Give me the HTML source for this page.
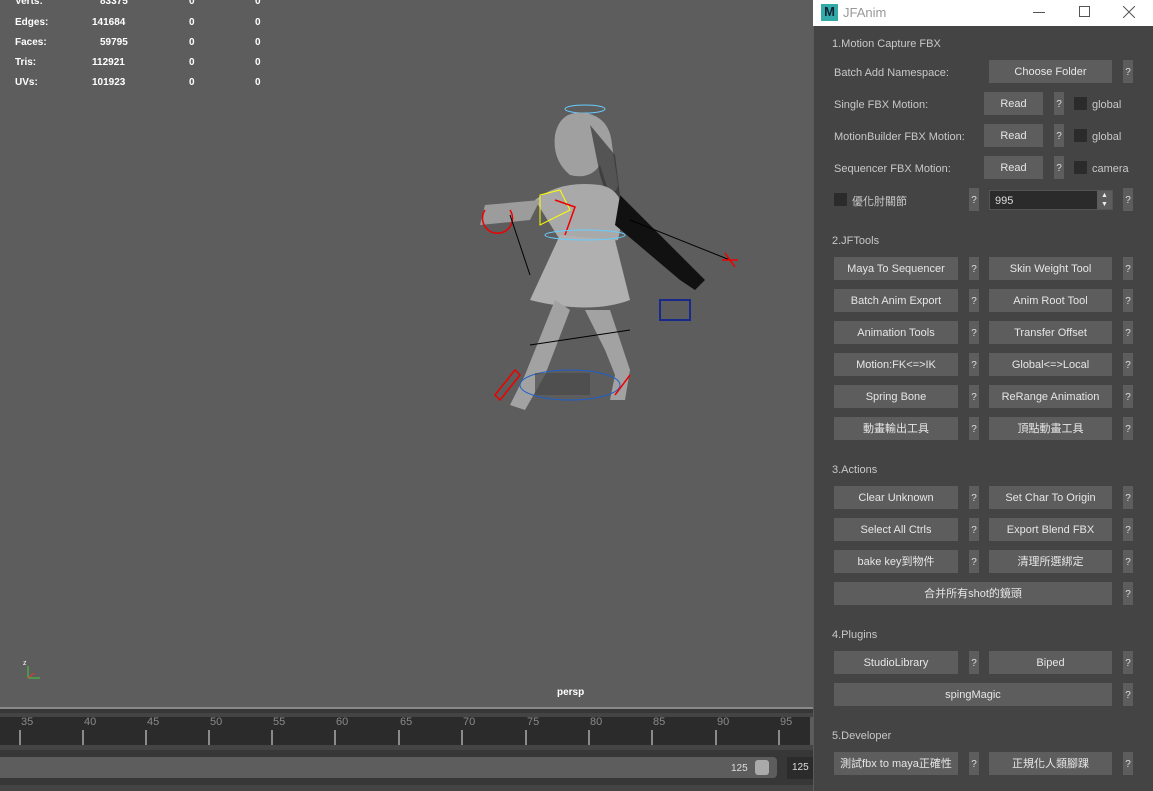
<!DOCTYPE html>
<html><head><meta charset="utf-8"><style>
*{margin:0;padding:0;box-sizing:border-box}
body{width:1153px;height:791px;overflow:hidden;background:#5d5d5d;font-family:"Liberation Sans","Noto Sans CJK TC",sans-serif;position:relative}
.a{position:absolute}
.st{color:#fff;font-weight:bold;font-size:10px;position:absolute}
.panel{position:absolute;left:813px;top:0;width:340px;height:791px;background:#444;border-left:1px solid #5a5a5a}
.tb{position:absolute;left:813px;top:0;width:340px;height:26px;background:#fff}
.h{position:absolute;left:832px;font-size:11px;color:#c8c8c8}
.lb{position:absolute;left:834px;font-size:11px;color:#c8c8c8}
.b{position:absolute;height:23px;background:#5d5d5d;color:#e6e6e6;font-size:11px;text-align:center;line-height:25px;white-space:nowrap}
.q{position:absolute;width:10px;height:23px;background:#5d5d5d;color:#ddd;font-size:10px;text-align:center;line-height:25px}
.cb{position:absolute;width:13px;height:13px;background:#2b2b2b}
.tk{position:absolute;top:730px;width:2px;height:15px;background:#8a8a8a}
.tl{position:absolute;top:716px;font-size:11px;color:#8a8a8a}
</style></head><body>

<div class="st" style="left:15px;top:-4px">Verts:</div><div class="st" style="left:100px;top:-4px">83375</div>
<div class="st" style="left:15px;top:17px">Edges:</div><div class="st" style="left:92px;top:17px">141684</div>
<div class="st" style="left:15px;top:37px">Faces:</div><div class="st" style="left:100px;top:37px">59795</div>
<div class="st" style="left:15px;top:57px">Tris:</div><div class="st" style="left:92px;top:57px">112921</div>
<div class="st" style="left:15px;top:77px">UVs:</div><div class="st" style="left:92px;top:77px">101923</div>
<div class="st" style="left:189px;top:-4px">0</div><div class="st" style="left:255px;top:-4px">0</div>
<div class="st" style="left:189px;top:17px">0</div><div class="st" style="left:255px;top:17px">0</div>
<div class="st" style="left:189px;top:37px">0</div><div class="st" style="left:255px;top:37px">0</div>
<div class="st" style="left:189px;top:57px">0</div><div class="st" style="left:255px;top:57px">0</div>
<div class="st" style="left:189px;top:77px">0</div><div class="st" style="left:255px;top:77px">0</div>

<svg class="a" style="left:440px;top:95px" width="320" height="330" viewBox="0 0 320 330">
<ellipse cx="145" cy="14" rx="20" ry="4" fill="none" stroke="#6cf" stroke-width="1"/>
<path d="M115 40 Q120 15 145 18 Q170 22 172 50 L178 90 Q176 100 168 95 L160 70 Q150 85 130 80 Q112 65 115 40Z" fill="#a0a0a0"/>
<path d="M150 30 L175 60 L180 100 L170 110 L160 80Z" fill="#333" opacity=".7"/>
<path d="M95 105 Q120 85 160 90 Q185 95 182 125 L178 145 L150 150 L120 145 Z" fill="#a9a9a9"/>
<path d="M100 105 L45 110 L40 130 L90 125 Z" fill="#9c9c9c"/>
<path d="M120 140 L175 145 L190 205 Q150 220 90 205 Z" fill="#b0b0b0"/>
<path d="M115 205 L85 280 L70 310 L85 315 L105 280 L130 215Z" fill="#a2a2a2"/>
<path d="M145 215 L165 255 L175 280 L170 305 L185 305 L190 275 L170 215Z" fill="#a2a2a2"/>
<path d="M180 100 L250 170 L265 185 L255 195 L240 185 L175 130Z" fill="#111"/>
<ellipse cx="130" cy="290" rx="50" ry="15" fill="none" stroke="#1e5fc8" stroke-width="1"/>
<rect x="95" y="278" width="55" height="22" fill="#4a4a4a" opacity=".7"/>
<path d="M60 305 L80 280 L75 275 L55 300Z M175 300 L190 280" fill="none" stroke="#e00" stroke-width="1.5"/>
<path d="M45 115 a15 15 0 1 0 25 0" fill="none" stroke="#e00" stroke-width="1.5"/>
<path d="M100 100 L120 95 L130 115 L100 130 Z" fill="none" stroke="#ff0" stroke-width="1"/>
<path d="M115 105 L135 112 L125 140" fill="none" stroke="#e00" stroke-width="1.5"/>
<path d="M190 125 L290 165 M90 250 L190 235 M70 120 L90 180" stroke="#000" stroke-width="1"/>
<path d="M285 158 L295 172 M282 165 L298 165" stroke="#e00" stroke-width="1.5"/>
<rect x="220" y="205" width="30" height="20" fill="none" stroke="#1a2a8a" stroke-width="2"/>
<ellipse cx="145" cy="140" rx="40" ry="5" fill="none" stroke="#6cf" stroke-width="1"/>
</svg>

<svg class="a" style="left:20px;top:658px" width="25" height="25"><path d="M8 20 L8 8 M8 20 L20 20" stroke="#4c4" stroke-width="1"/><path d="M8 20 L14 15" stroke="#e33"/><text x="3" y="7" font-size="7" fill="#fff">z</text></svg>
<div class="a" style="left:557px;top:687px;color:#fff;font-size:10px;font-weight:bold">persp</div>

<div class="a" style="left:0;top:707px;width:813px;height:2px;background:#8a8a8a"></div>
<div class="a" style="left:0;top:709px;width:813px;height:4px;background:#373737"></div>
<div class="a" style="left:0;top:713px;width:813px;height:4px;background:#444"></div>
<div class="a" style="left:0;top:717px;width:810px;height:28px;background:#2b2b2b"></div>
<div class="a" style="left:0;top:745px;width:813px;height:5px;background:#444"></div>
<div class="a" style="left:0;top:750px;width:813px;height:41px;background:#373737"></div>
<div class="a" style="left:0;top:757px;width:777px;height:21px;background:#5d5d5d;border-radius:0 4px 4px 0"></div>
<div class="a" style="left:731px;top:763px;color:#ddd;font-size:10px">125</div>
<div class="a" style="left:755px;top:760px;width:14px;height:15px;background:#aaa;border-radius:3px"></div>
<div class="a" style="left:787px;top:757px;width:26px;height:22px;background:#2b2b2b;color:#ddd;font-size:10px;line-height:22px;padding-left:5px">125</div>
<div class="a" style="left:0;top:785px;width:813px;height:6px;background:#444"></div>

<div class="tk" style="left:19px"></div><div class="tl" style="left:21px">35</div>
<div class="tk" style="left:82px"></div><div class="tl" style="left:84px">40</div>
<div class="tk" style="left:145px"></div><div class="tl" style="left:147px">45</div>
<div class="tk" style="left:208px"></div><div class="tl" style="left:210px">50</div>
<div class="tk" style="left:271px"></div><div class="tl" style="left:273px">55</div>
<div class="tk" style="left:334px"></div><div class="tl" style="left:336px">60</div>
<div class="tk" style="left:398px"></div><div class="tl" style="left:400px">65</div>
<div class="tk" style="left:461px"></div><div class="tl" style="left:463px">70</div>
<div class="tk" style="left:525px"></div><div class="tl" style="left:527px">75</div>
<div class="tk" style="left:588px"></div><div class="tl" style="left:590px">80</div>
<div class="tk" style="left:651px"></div><div class="tl" style="left:653px">85</div>
<div class="tk" style="left:715px"></div><div class="tl" style="left:717px">90</div>
<div class="tk" style="left:778px"></div><div class="tl" style="left:780px">95</div>

<div class="panel"></div>
<div class="tb">
 <div class="a" style="left:8px;top:4px;width:17px;height:17px;background:#3aa;color:#123;font-weight:bold;font-size:13px;text-align:center;line-height:15px">M</div>
 <div class="a" style="left:30px;top:5px;font-size:13px;color:#999">JFAnim</div>
 <div class="a" style="left:220px;top:12px;width:12px;height:1px;background:#555"></div>
 <div class="a" style="left:266px;top:6px;width:11px;height:11px;border:1px solid #555"></div>
 <svg class="a" style="left:310px;top:6px" width="12" height="12"><path d="M0 0L12 12M12 0L0 12" stroke="#555"/></svg>
</div>

<div class="h" style="top:38px">1.Motion Capture FBX</div>
<div class="lb" style="top:67px">Batch Add Namespace:</div>
<div class="b" style="left:989px;top:60px;width:123px">Choose Folder</div><div class="q" style="left:1123px;top:60px">?</div>
<div class="lb" style="top:99px">Single FBX Motion:</div>
<div class="b" style="left:984px;top:92px;width:59px">Read</div><div class="q" style="left:1054px;top:92px">?</div><div class="cb" style="left:1074px;top:97px"></div><div class="lb" style="left:1092px;top:99px">global</div>
<div class="lb" style="top:131px">MotionBuilder FBX Motion:</div>
<div class="b" style="left:984px;top:124px;width:59px">Read</div><div class="q" style="left:1054px;top:124px">?</div><div class="cb" style="left:1074px;top:129px"></div><div class="lb" style="left:1092px;top:131px">global</div>
<div class="lb" style="top:163px">Sequencer FBX Motion:</div>
<div class="b" style="left:984px;top:156px;width:59px">Read</div><div class="q" style="left:1054px;top:156px">?</div><div class="cb" style="left:1074px;top:161px"></div><div class="lb" style="left:1092px;top:163px">camera</div>
<div class="cb" style="left:834px;top:193px"></div><div class="lb" style="left:852px;top:193px">優化肘關節</div>
<div class="q" style="left:969px;top:188px">?</div>
<div class="a" style="left:989px;top:190px;width:124px;height:20px;background:#2b2b2b;border:1px solid #555;color:#ddd;font-size:11px;line-height:20px;padding-left:5px">995</div>
<div class="a" style="left:1097px;top:191px;width:15px;height:18px;background:#5d5d5d;color:#eee;font-size:7px;line-height:9px;text-align:center">▲<br>▼</div>
<div class="q" style="left:1123px;top:188px">?</div>

<div class="h" style="top:235px">2.JFTools</div>
<div class="b" style="left:834px;top:257px;width:124px">Maya To Sequencer</div><div class="q" style="left:969px;top:257px">?</div><div class="b" style="left:989px;top:257px;width:123px">Skin Weight Tool</div><div class="q" style="left:1123px;top:257px">?</div>
<div class="b" style="left:834px;top:289px;width:124px">Batch Anim Export</div><div class="q" style="left:969px;top:289px">?</div><div class="b" style="left:989px;top:289px;width:123px">Anim Root Tool</div><div class="q" style="left:1123px;top:289px">?</div>
<div class="b" style="left:834px;top:321px;width:124px">Animation Tools</div><div class="q" style="left:969px;top:321px">?</div><div class="b" style="left:989px;top:321px;width:123px">Transfer Offset</div><div class="q" style="left:1123px;top:321px">?</div>
<div class="b" style="left:834px;top:353px;width:124px">Motion:FK&lt;=&gt;IK</div><div class="q" style="left:969px;top:353px">?</div><div class="b" style="left:989px;top:353px;width:123px">Global&lt;=&gt;Local</div><div class="q" style="left:1123px;top:353px">?</div>
<div class="b" style="left:834px;top:385px;width:124px">Spring Bone</div><div class="q" style="left:969px;top:385px">?</div><div class="b" style="left:989px;top:385px;width:123px">ReRange Animation</div><div class="q" style="left:1123px;top:385px">?</div>
<div class="b" style="left:834px;top:417px;width:124px">動畫輸出工具</div><div class="q" style="left:969px;top:417px">?</div><div class="b" style="left:989px;top:417px;width:123px">頂點動畫工具</div><div class="q" style="left:1123px;top:417px">?</div>

<div class="h" style="top:464px">3.Actions</div>
<div class="b" style="left:834px;top:486px;width:124px">Clear Unknown</div><div class="q" style="left:969px;top:486px">?</div><div class="b" style="left:989px;top:486px;width:123px">Set Char To Origin</div><div class="q" style="left:1123px;top:486px">?</div>
<div class="b" style="left:834px;top:518px;width:124px">Select All Ctrls</div><div class="q" style="left:969px;top:518px">?</div><div class="b" style="left:989px;top:518px;width:123px">Export Blend FBX</div><div class="q" style="left:1123px;top:518px">?</div>
<div class="b" style="left:834px;top:550px;width:124px">bake key到物件</div><div class="q" style="left:969px;top:550px">?</div><div class="b" style="left:989px;top:550px;width:123px">清理所選綁定</div><div class="q" style="left:1123px;top:550px">?</div>
<div class="b" style="left:834px;top:582px;width:278px">合并所有shot的鏡頭</div><div class="q" style="left:1123px;top:582px">?</div>

<div class="h" style="top:629px">4.Plugins</div>
<div class="b" style="left:834px;top:651px;width:124px">StudioLibrary</div><div class="q" style="left:969px;top:651px">?</div><div class="b" style="left:989px;top:651px;width:123px">Biped</div><div class="q" style="left:1123px;top:651px">?</div>
<div class="b" style="left:834px;top:683px;width:278px">spingMagic</div><div class="q" style="left:1123px;top:683px">?</div>

<div class="h" style="top:730px">5.Developer</div>
<div class="b" style="left:834px;top:752px;width:124px">測試fbx to maya正確性</div><div class="q" style="left:969px;top:752px">?</div><div class="b" style="left:989px;top:752px;width:123px">正規化人類腳踝</div><div class="q" style="left:1123px;top:752px">?</div>
</body></html>
